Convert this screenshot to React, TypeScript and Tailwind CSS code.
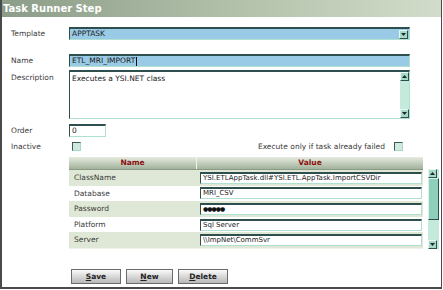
import React from 'react';

const font = { fontFamily: '"DejaVu Sans", Verdana, sans-serif' };

const rows = [
  { name: 'ClassName', value: 'YSI.ETLAppTask.dll#YSI.ETL.AppTask.ImportCSVDir' },
  { name: 'Database', value: 'MRI_CSV' },
  { name: 'Password', value: '●●●●●' },
  { name: 'Platform', value: 'Sql Server' },
  { name: 'Server', value: '\\\\ImpNet\\CommSvr' },
];

const Arrow = ({ up }: { up?: boolean }) => (
  <div className="w-[9px] h-[9px] bg-[#a8d8c8] border border-t-[#e8f8f0] border-l-[#e8f8f0] border-b-[#2f4f4f] border-r-[#2f4f4f] flex items-center justify-center">
    <svg width="5" height="3" viewBox="0 0 5 3">
      {up ? <path d="M0 3 L2.5 0 L5 3 Z" fill="#1a2a2a" /> : <path d="M0 0 L2.5 3 L5 0 Z" fill="#1a2a2a" />}
    </svg>
  </div>
);

const Checkbox = () => (
  <div className="w-[9px] h-[9px] bg-[#cfe9df] border border-t-[#3d5a55] border-l-[#3d5a55] border-b-[#a8d8c8] border-r-[#a8d8c8]" />
);

const Btn = ({ label, rest, w }: { label: string; rest: string; w: string }) => (
  <button
    className={`${w} h-[15px] border border-[#6b6b6b] bg-gradient-to-b from-[#fafafa] to-[#b8b8b8] text-[7.5px] font-bold text-[#222] flex items-center justify-center leading-none`}
  >
    <span className="underline">{label}</span>
    <span>{rest}</span>
  </button>
);

export default function App() {
  return (
    <div className="w-[443px] h-[290px] bg-white overflow-hidden" style={font}>
      <div className="w-[442px] h-[289px] border-l-2 border-r border-b-2 border-[#4a4a4a] flex flex-col">
        <div className="h-[17px] bg-gradient-to-r from-[#8b9c88] via-[#b0bfa8] to-[#d2dcca] flex items-center pl-[1px]">
          <span className="text-white font-bold text-[10px] leading-none">Task Runner Step</span>
        </div>

        <div className="pl-[9px] text-[7.5px] text-[#3a3a3a] leading-none">
          {/* Template */}
          <div className="flex items-center mt-[10px] h-[13px]">
            <span className="w-[58px]">Template</span>
            <div className="w-[341px] h-[13px] bg-[#9acbe6] border-t-2 border-l border-[#2f4f4f] border-b border-r border-b-[#b0e0d0] border-r-[#b0e0d0] flex items-center justify-between pl-[2px] pr-[1px]">
              <span className="text-[#1a1a1a]">APPTASK</span>
              <Arrow />
            </div>
          </div>

          {/* Name */}
          <div className="flex items-center mt-[14px] h-[13px]">
            <span className="w-[58px]">Name</span>
            <div className="w-[341px] h-[13px] bg-[#9acbe6] border-t-2 border-l border-[#2f4f4f] border-b border-r border-b-[#b0e0d0] border-r-[#b0e0d0] flex items-center pl-[2px]">
              <span className="text-[#1a1a1a]">ETL_MRI_IMPORT</span>
              <span className="w-px h-[9px] bg-[#111] ml-px" />
            </div>
          </div>

          {/* Description */}
          <div className="flex mt-[3px]">
            <span className="w-[58px] pt-[4px]">Description</span>
            <div className="w-[341px] h-[49px] bg-white border-t-2 border-l border-[#2f4f4f] border-b border-r border-b-[#b0e0d0] border-r-[#b0e0d0] flex justify-between">
              <span className="pl-[2px] pt-[3px] text-[#1a1a1a]">Executes a YSI.NET class</span>
              <div className="w-[9px] h-full bg-[#c4eadc] flex flex-col justify-between">
                <Arrow up />
                <Arrow />
              </div>
            </div>
          </div>

          {/* Order */}
          <div className="flex items-center mt-[5px] h-[13px]">
            <span className="w-[58px]">Order</span>
            <div className="w-[37px] h-[13px] bg-white border-t-2 border-l border-[#2f4f4f] border-b border-r border-b-[#b0e0d0] border-r-[#b0e0d0] flex items-center pl-[2px]">
              <span className="text-[#1a1a1a]">0</span>
            </div>
          </div>

          {/* Inactive */}
          <div className="flex items-center mt-[4px] h-[11px]">
            <span className="w-[61px]">Inactive</span>
            <Checkbox />
            <span className="ml-[172px] w-[132px] text-right">Execute only if task already failed</span>
            <span className="ml-[9px]">
              <Checkbox />
            </span>
          </div>

          {/* Parameters table */}
          <div className="flex mt-[5px] ml-[58px]">
            <div className="w-[354px] bg-[#eef3ea]">
              <div className="grid grid-cols-[128px_226px] h-[13px] bg-gradient-to-b from-[#e6ece0] to-[#a3b29c] border-b border-[#8a9a84]">
                <div className="flex items-center justify-center font-bold text-[#8b1010] border-r border-[#f0f4ec]">Name</div>
                <div className="flex items-center justify-center font-bold text-[#8b1010]">Value</div>
              </div>
              {rows.map((r, i) => (
                <div
                  key={r.name}
                  className={`grid grid-cols-[128px_226px] h-[15.6px] items-center ${i % 2 === 0 ? 'bg-[#dfe8d6]' : 'bg-white'}`}
                >
                  <span className="pl-[5px] text-[#3a3a3a]">{r.name}</span>
                  <div className="pl-[3px] pr-[1px]">
                    <div className="h-[12px] bg-white border-t-2 border-l border-[#2f4f4f] border-b border-r border-b-[#b0e0d0] border-r-[#b0e0d0] flex items-center pl-[2px] overflow-hidden whitespace-nowrap">
                      <span className={r.name === 'Password' ? 'text-[6px] tracking-[-1px] text-[#111]' : 'text-[7px] text-[#1a1a1a]'}>{r.value}</span>
                    </div>
                  </div>
                </div>
              ))}
            </div>
            <div className="ml-[5px] mt-[12px] w-[11px] h-[80px] bg-[#c4eadc] flex flex-col">
              <Arrow up />
              <div className="flex-1 flex flex-col">
                <div className="h-[42px] bg-[#8ecfbb] border border-t-[#d8f4ea] border-l-[#d8f4ea] border-b-[#2f4f4f] border-r-[#2f4f4f]" />
              </div>
              <Arrow />
            </div>
          </div>

          {/* Buttons */}
          <div className="flex gap-[5px] mt-[20px] ml-[60px]">
            <Btn label="S" rest="ave" w="w-[50px]" />
            <Btn label="N" rest="ew" w="w-[47px]" />
            <Btn label="D" rest="elete" w="w-[50px]" />
          </div>
        </div>
      </div>
    </div>
  );
}
